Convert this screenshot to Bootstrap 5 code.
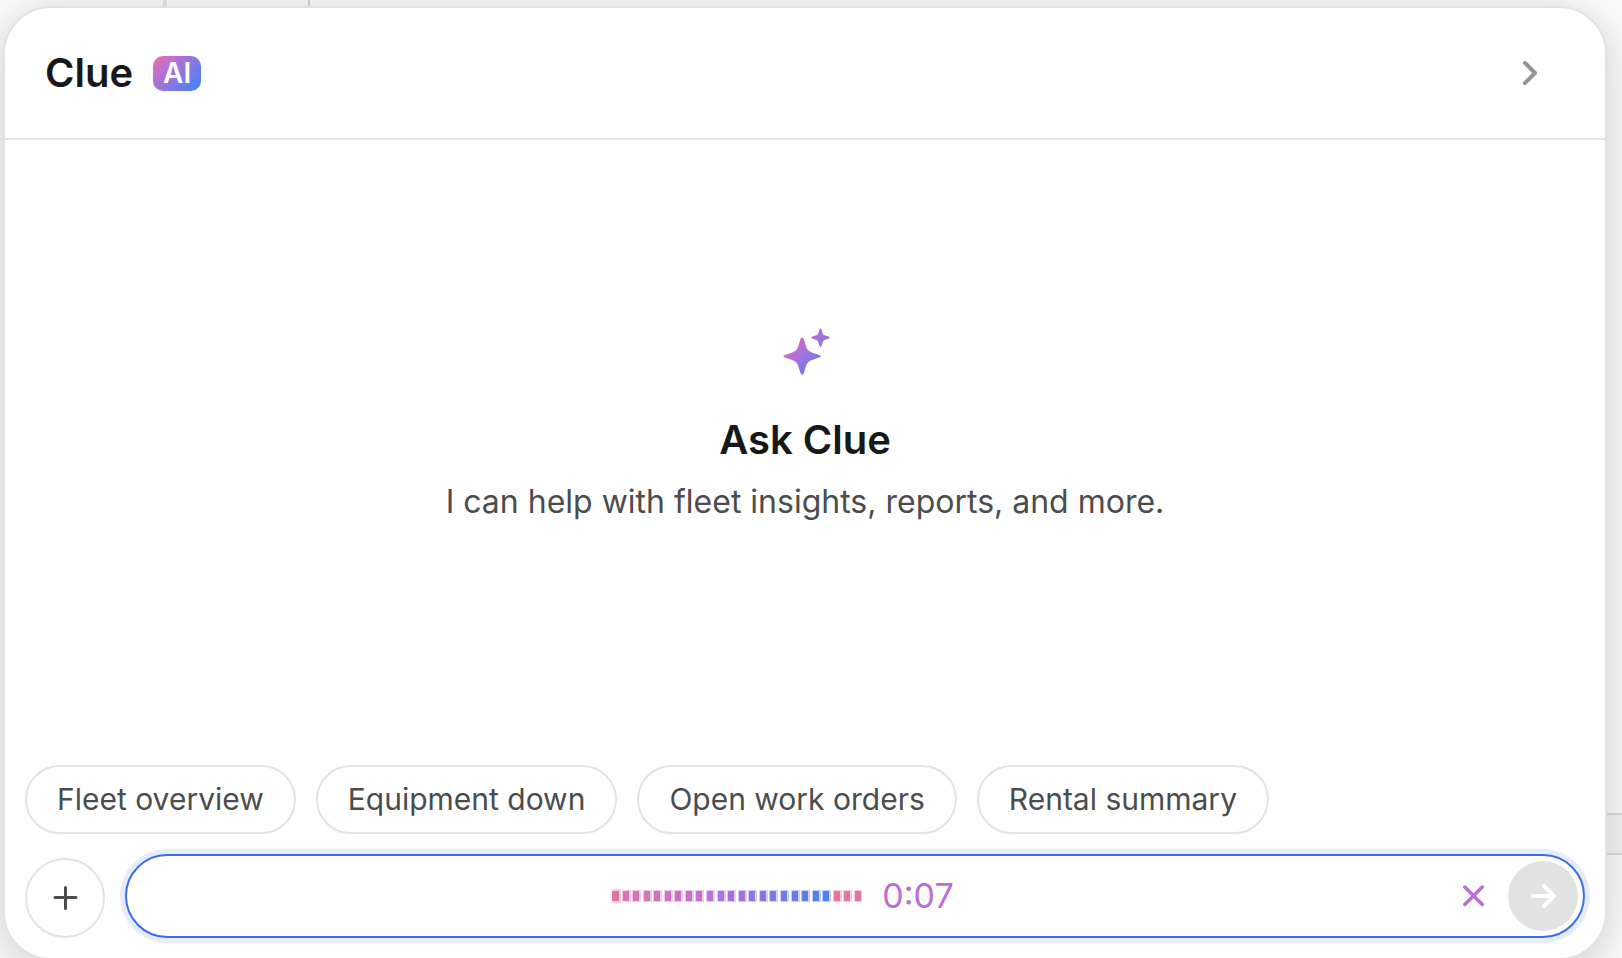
<!DOCTYPE html>
<html lang="en">
<head>
<meta charset="utf-8">
<meta name="viewport" content="width=device-width, initial-scale=1">
<title>Clue AI</title>
<link href="https://cdn.jsdelivr.net/npm/bootstrap@5.3.0/dist/css/bootstrap.min.css" rel="stylesheet">
<style>
  :root { --line: #e2e2e2; --ink: #17181a; --soft: #4b4c4e; --violet: #bb6fd3; }
  body { font-family: Inter, "Liberation Sans", sans-serif; color: var(--ink); background: #fafafa; }
  .stage { height: 100vh; padding: 6px 15px 0 3px; position: relative; }
  .edge { position: absolute; background: #d5d5d5; }
  .edge-rail { left: 163px; top: 0; width: 4px; height: 20px; background: #e4e4e4; }
  .edge-pane { left: 308px; top: 0; width: 2px; height: 20px; }
  .edge-row { right: 0; top: 813px; width: 30px; height: 42px; background: #f3f3f3; border: solid #d9d9d9; border-width: 2px 0; }
  .panel { position: relative; flex: none; height: calc(100vh - 4px); background: #fff; border: 2px solid var(--line); border-radius: 48px; box-shadow: 0 8px 40px rgba(0,0,0,.18); }
  .panel-head { height: 132px; padding: 0 60px 0 40px; border-bottom: 2px solid var(--line); }
  .title { font-size: 40px; line-height: 48px; font-weight: 600; margin: 0; }
  .tag-ai { width: 48px; height: 35px; border-radius: 10px; font-size: 28px; line-height: 35px; font-weight: 600; color: #fff; text-align: center; background: linear-gradient(135deg, #f0709c 0%, #bb6fd3 28%, #4a83f3 90%); }
  .bare { border: 0; background: none; padding: 0; display: flex; }
  .intro { padding-bottom: 56px; }
  .intro .title { margin: 40px 0 18px; }
  .subtitle { font-size: 32px; line-height: 40px; color: var(--soft); }
  .chip { font-size: 30px; line-height: 37px; padding: 14px 30px; border: 2px solid var(--line); border-radius: 36px; background: #fff; color: var(--soft); }
  .foot { padding: 0 20px 20px; gap: 20px; }
  .gap-chip { gap: 20px; }
  .add { width: 80px; height: 80px; border: 2px solid var(--line); border-radius: 50%; background: #fff; color: var(--soft); }
  .recorder { height: 84px; padding: 0 5px; border: 2px solid #396ce8; border-radius: 42px; box-shadow: 0 0 0 5px #e6ecfd; }
  .time { font-size: 34px; line-height: 40px; color: var(--violet); }
  .send { width: 70px; height: 70px; border: 0; border-radius: 50%; background: var(--line); color: #fff; }
  .send, .add { display: flex; align-items: center; justify-content: center; padding: 0; flex: none; }
  .side { width: 144px; gap: 24px; }
</style>
</head>
<body class="overflow-hidden">
<div class="stage">
  <div class="edge edge-rail"></div>
  <div class="edge edge-pane"></div>
  <div class="edge edge-row"></div>
  <main class="panel d-flex flex-column">
    <header class="panel-head d-flex align-items-center justify-content-between">
      <div class="d-flex align-items-center gap-chip">
        <h1 class="title">Clue</h1>
        <span class="tag-ai">AI</span>
      </div>
      <button class="bare" type="button" aria-label="Collapse">
        <svg width="32" height="32" viewBox="0 0 32 32" fill="none" stroke="#929496" stroke-width="4" stroke-linecap="round" stroke-linejoin="round"><path d="M12 6l10 10-10 10"/></svg>
      </button>
    </header>
    <section class="intro flex-grow-1 d-flex flex-column align-items-center justify-content-center text-center">
      <svg width="52" height="48" viewBox="-4 0 52 48" aria-hidden="true">
        <defs><linearGradient id="spark" gradientUnits="userSpaceOnUse" x1="0" y1="0" x2="48" y2="48"><stop offset="0" stop-color="#f0709c"/><stop offset=".36" stop-color="#bb6fd3"/><stop offset=".9" stop-color="#4a83f3"/></linearGradient></defs>
        <path fill="url(#spark)" d="M19 9.500Q20.400 9.500 21 11.500C22.800 17.500 23.500 21 25.500 22.500C27.500 24.300 31 25 36 27Q39.500 28.200 36 29.500C31 31.500 27.500 32.200 25.500 34C23.500 35.500 22.800 39 21 45Q19.200 48.500 17.500 45C15.500 39 14.800 35.500 12.800 34C10.800 32.200 7 31.500 2 29.500Q-1 28.200 2 27C7 25 10.800 24.300 12.800 22.500C14.800 21 15.500 17.500 17.200 11.500Q17.800 9.500 19 9.500ZM37.500 .500Q38.400 .500 38.800 2C39.500 5 39.800 6.500 41 7L45.500 8.600Q48 9.700 45.500 10.800L41 12.300C39.800 12.900 39.500 14.500 38.800 17.500Q37.500 20 36.300 17.500C35.500 14.500 35.200 12.900 34 12.300L29.500 10.800Q27 9.700 29.500 8.600L34 7C35.200 6.500 35.500 5 36.300 2Q36.700 .500 37.500 .500Z"/>
      </svg>
      <h2 class="title">Ask Clue</h2>
      <p class="subtitle mb-0">I can help with fleet insights, reports, and more.</p>
    </section>
    <footer class="foot d-flex flex-column">
      <div class="d-flex flex-wrap gap-chip">
        <button class="chip" type="button">Fleet overview</button>
        <button class="chip" type="button">Equipment down</button>
        <button class="chip" type="button">Open work orders</button>
        <button class="chip" type="button">Rental summary</button>
      </div>
      <div class="d-flex align-items-end gap-chip">
        <button class="add" type="button" aria-label="Add">
          <svg width="32" height="32" viewBox="0 0 32 32" fill="none" stroke="currentColor" stroke-width="3" stroke-linecap="round"><path d="M16.500 5.500v21M6 15.500h21"/></svg>
        </button>
        <div class="recorder flex-grow-1 d-flex align-items-center">
          <div class="flex-grow-1 d-flex align-items-center justify-content-center gap-chip">
            <svg id="wave" width="250" height="16" viewBox="0 0 250 16" role="img" aria-label="Recording level"></svg>
            <span class="time">0:07</span>
          </div>
          <div class="side d-flex align-items-center justify-content-end">
            <button class="bare" type="button" aria-label="Cancel recording">
              <svg width="21" height="22" viewBox="0 0 21 22" fill="none" stroke="#bb6fd3" stroke-width="3.500" stroke-linecap="round"><path d="M1.800 2l17.500 17.500M19.300 2l-17.500 17.500"/></svg>
            </button>
            <button class="send" type="button" aria-label="Send">
              <svg width="32" height="32" viewBox="0 0 32 32" fill="none" stroke="currentColor" stroke-width="4" stroke-linecap="round" stroke-linejoin="round"><path d="M6 16h20M17 6l10 10-10 10"/></svg>
            </button>
          </div>
        </div>
      </div>
    </footer>
  </main>
</div>
<script src="https://cdn.jsdelivr.net/npm/bootstrap@5.3.0/dist/js/bootstrap.bundle.min.js"></script>
<script>
  const colors = ['#e274a8','#dc74ae','#d973b3','#d772b7','#d271bb','#cf71c0','#cb71c5','#c670c9','#c070ce','#bb70d3','#b171d6','#a873d9','#9e74db','#9375dc','#8876dc','#7e78df','#7379e1','#687ae4','#5e7ce8','#567eeb','#4f80ee','#ec729c','#e973a1','#e572a5'];
  const bar = (x, y, w, h, c, o) => `<rect x="${x}" y="${y}" width="${w}" height="${h}" fill="${c}" opacity="${o}"/>`;
  document.getElementById('wave').innerHTML = colors.map((c, i) => {
    const x = Math.round(i * 10.56), w = i ? 6 : 7;
    return bar(x - 1, i ? 2 : 1, w + 3, i ? 12 : 14, c, .35) + bar(x, 3, w, 10, c, 1);
  }).join('');
</script>
</body>
</html>
